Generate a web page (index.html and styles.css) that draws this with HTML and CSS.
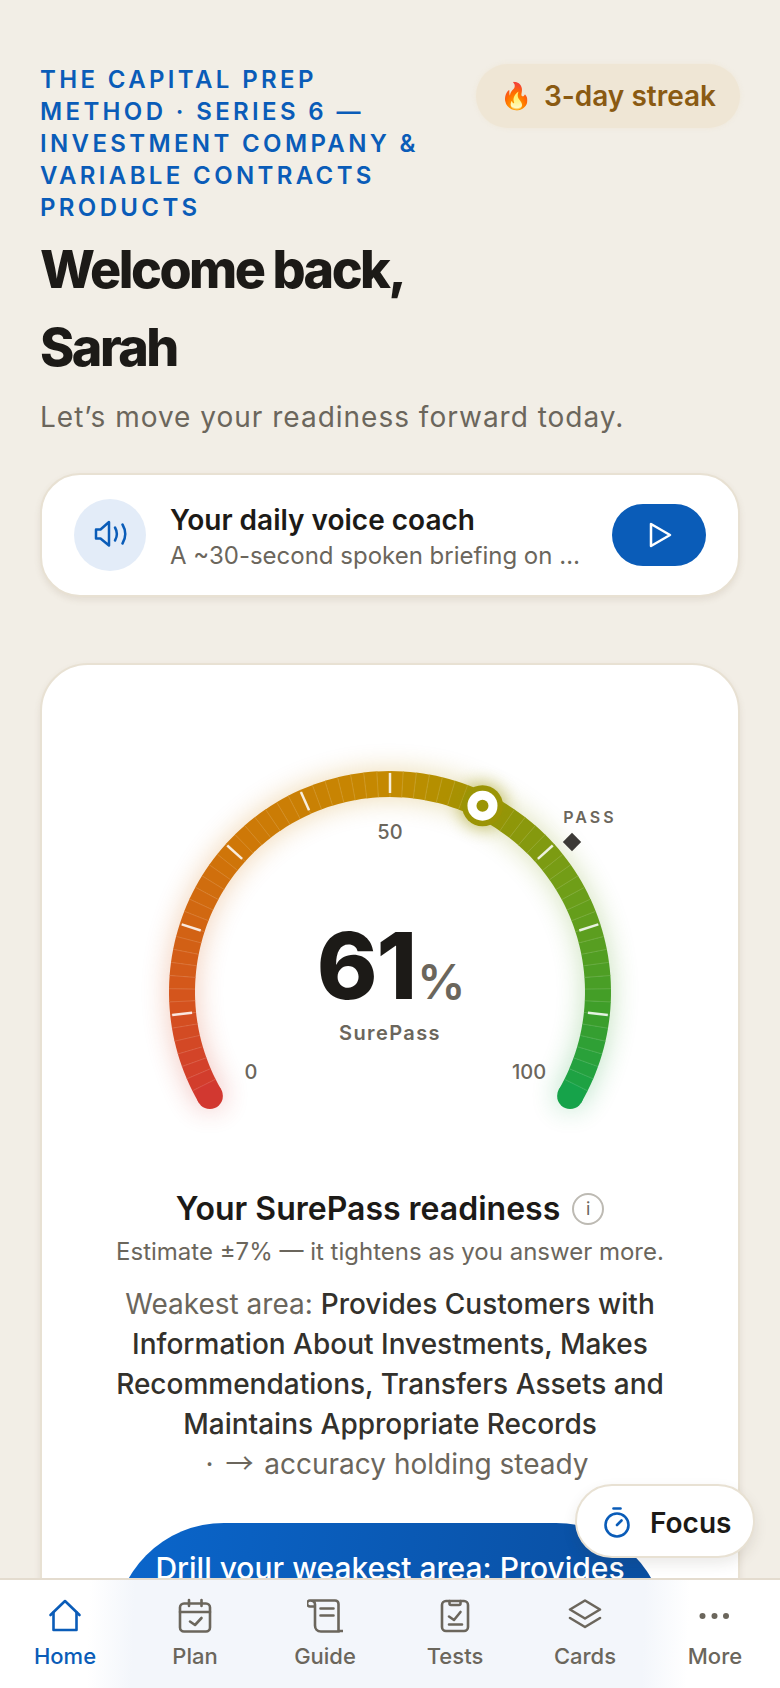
FILE: index.html
```html
<!DOCTYPE html>
<html lang="en">
<head>
<meta charset="utf-8">
<title>Capital Prep</title>
<link rel="stylesheet" href="styles.css">
</head>
<body>
<main class="page">
  <header class="top">
    <div class="intro">
      <p class="eyebrow">THE CAPITAL PREP METHOD · SERIES 6 — INVESTMENT COMPANY &amp; VARIABLE CONTRACTS PRODUCTS</p>
      <h1 class="welcome">Welcome back, Sarah</h1>
    </div>
    <div class="streak"><span class="flame">🔥</span><span>3-day streak</span></div>
  </header>
  <p class="lede">Let’s move your readiness forward today.</p>

  <section class="coach">
    <div class="coach-icon">
      <svg class="ico36" viewBox="0 0 36 36" fill="none" stroke="#0a5cb8" stroke-width="2.5" stroke-linecap="round" stroke-linejoin="round">
        <path d="M4 12.500h4.500L17 5v23.500l-8.500-7H4z"/>
        <path d="M23 10.500c2.200 3.800 2.200 9.200 0 13"/>
        <path d="M30.500 7.500c3.500 6 3.500 13 0 19"/>
      </svg>
    </div>
    <div class="coach-text">
      <div class="coach-title">Your daily voice coach</div>
      <div class="coach-sub">A ~30-second spoken briefing on today’s focus</div>
    </div>
    <button class="play" type="button">
      <svg class="ico36" viewBox="0 0 36 36" fill="none" stroke="#fff" stroke-width="2.500" stroke-linejoin="round"><path d="M10 7v22l19-11z"/></svg>
    </button>
  </section>

  <section class="card">
    <svg class="gauge" id="gauge" viewBox="0 0 552 420" width="552" height="420">
      <g id="glow" class="gauge-glow"></g>
      <g id="segments"></g>
      <g id="ticks"></g>
      <text class="g-num" x="276" y="120">50</text>
      <text class="g-num" x="137" y="360">0</text>
      <text class="g-num" x="415" y="360">100</text>
      <text class="g-pass" x="476" y="104">PASS</text>
      <rect class="g-diamond" x="451.500" y="116.500" width="13" height="13" transform="rotate(45 458 123)"/>
      <g id="marker"></g>
      <text class="g-score" x="277" y="280">61<tspan class="g-pct" dx="1">%</tspan></text>
      <text class="g-label" x="276" y="321">SurePass</text>
    </svg>

    <h2 class="ready">Your SurePass readiness <span class="info">i</span></h2>
    <p class="estimate">Estimate ±7% — it tightens as you answer more.</p>
    <p class="weak">Weakest area: <strong>Provides Customers with Information About Investments, Makes Recommendations, Transfers Assets and Maintains Appropriate Records</strong><span class="trend">· <span class="arrow">→</span> accuracy holding steady</span></p>
    <button class="drill" type="button">Drill your weakest area: Provides Customers with Information About Investments, Makes Recommendations, Transfers Assets and Maintains Appropriate Records</button>
  </section>
</main>

<button class="focus" type="button">
  <svg class="ico36" viewBox="0 0 36 36" fill="none" stroke="#0a5cb8" stroke-width="2.600" stroke-linecap="round"><path d="M14.500 3.500h7"/><circle cx="18" cy="20" r="11.500"/><path d="M18 20l4.500-4.500"/></svg>
  <span>Focus</span>
</button>

<nav class="tabs">
  <a class="tab active">
    <svg class="ico36" viewBox="0 0 36 36" fill="none" stroke="currentColor" stroke-width="2.600" stroke-linecap="round" stroke-linejoin="round"><path d="M3.500 17L18 3l14.500 14"/><path d="M6.500 14.500V32h23V14.500"/></svg>
    <span>Home</span>
  </a>
  <a class="tab">
    <svg class="ico36" viewBox="0 0 36 36" fill="none" stroke="currentColor" stroke-width="2.600" stroke-linecap="round" stroke-linejoin="round"><rect x="3" y="5.500" width="30" height="28" rx="4"/><path d="M3 14h30M12 2v6M24.500 2v6M13 23.500l5 3.500 6.500-7"/></svg>
    <span>Plan</span>
  </a>
  <a class="tab">
    <svg class="ico36" viewBox="0 0 36 36" fill="none" stroke="currentColor" stroke-width="2.600" stroke-linecap="round" stroke-linejoin="round"><path d="M3 2.500h25c2 0 3.500 1.500 3.500 3.500v27H36M3 2.500a3 3 0 0 0 0 6h4.500M3 2.500c3 0 5 1.500 5 4V27.500c0 3 2 6 6 6h18"/><path d="M13.500 10.500h13M13.500 17.500h13"/></svg>
    <span>Guide</span>
  </a>
  <a class="tab">
    <svg class="ico36" viewBox="0 0 36 36" fill="none" stroke="currentColor" stroke-width="2.600" stroke-linecap="round" stroke-linejoin="round"><rect x="5" y="3" width="26" height="30" rx="4"/><path d="M12.500 3v2.500c0 1 .5 1.500 1.500 1.500h8c1 0 1.500-.5 1.500-1.500V3M12 18.500l5 3.500 6.500-8M12 26.500h13"/></svg>
    <span>Tests</span>
  </a>
  <a class="tab">
    <svg class="ico36" viewBox="0 0 36 36" fill="none" stroke="currentColor" stroke-width="2.600" stroke-linecap="round" stroke-linejoin="round"><path d="M18 2.500l15 9-15 9-15-9z"/><path d="M3 20l15 9 15-9"/></svg>
    <span>Cards</span>
  </a>
  <a class="tab">
    <svg class="ico36" viewBox="0 0 36 36" fill="currentColor"><circle cx="5.500" cy="18" r="3"/><circle cx="17.500" cy="18" r="3"/><circle cx="29" cy="18" r="3"/></svg>
    <span>More</span>
  </a>
</nav>
<script src="gauge.js"></script>
</body>
</html>
```
FILE: styles.css
```css
* { box-sizing: border-box; }
html, body { margin: 0; padding: 0; }
body {
  position: relative;
  width: 780px;
  height: 1688px;
  overflow: hidden;
  background: #f2eee6;
  font-family: Inter, "Noto Sans", sans-serif;
  color: #1c1a17;
}
p, h1, h2 { margin: 0; }
.page { padding: 64px 40px 0; }
.top { display: flex; justify-content: space-between; align-items: flex-start; gap: 16px; }
.intro { flex: none; width: 385px; }
.eyebrow {
  font-size: 24px;
  line-height: 32px;
  font-weight: 600;
  letter-spacing: 3.360px;
  color: #0a5cb8;
}
.welcome {
  margin-top: 7px;
  font-size: 52px;
  line-height: 78px;
  font-weight: 800;
  letter-spacing: -2.500px;
  color: #1c1a17;
}
.streak {
  flex: none;
  display: flex;
  align-items: center;
  gap: 12px;
  height: 64px;
  padding: 0 24px;
  border-radius: 32px;
  background: #efe6d5;
  color: #8a5a12;
  font-size: 28px;
  font-weight: 600;
  box-shadow: 0 0 4px rgba(239, 230, 213, .8);
}
.flame { font-size: 26px; line-height: 1; }
.lede {
  margin-top: 9px;
  font-size: 28px;
  line-height: 42px;
  letter-spacing: 1px;
  color: #6b665c;
}
.coach {
  display: flex;
  align-items: center;
  gap: 24px;
  height: 124px;
  margin-top: 35px;
  padding: 0 32px;
  background: #fff;
  border: 2px solid #e8e1d3;
  border-radius: 40px;
  box-shadow: 0 3px 6px rgba(120, 100, 70, .12);
}
.coach-icon {
  flex: none;
  display: flex;
  align-items: center;
  justify-content: center;
  width: 72px;
  height: 72px;
  border-radius: 50%;
  background: #e3ecf8;
}
.ico36 { display: block; width: 36px; height: 36px; flex: none; }
.coach-text { flex: 1; min-width: 0; padding: 4px 8px 0 0; }
.coach-title { font-size: 28px; line-height: 36px; font-weight: 600; color: #1c1a17; }
.coach-sub {
  margin-top: 2px;
  font-size: 24px;
  line-height: 32px;
  color: #6b665c;
  white-space: nowrap;
  overflow: hidden;
  text-overflow: ellipsis;
}
.play {
  flex: none;
  display: flex;
  align-items: center;
  justify-content: center;
  width: 94px;
  height: 62px;
  padding: 0;
  border: 0;
  border-radius: 31px;
  background: #0a5cb8;
}
.card {
  margin-top: 66px;
  height: 1200px;
  padding: 54px 72px 0;
  background: #fff;
  border: 2px solid #e8e1d3;
  border-radius: 48px;
  box-shadow: 0 3px 6px rgba(120, 100, 70, .12);
  text-align: center;
}
.gauge { display: block; overflow: visible; font-family: Inter, "Noto Sans", sans-serif; }
.gauge-glow { filter: blur(14px); opacity: .32; }
.g-num { font-size: 20px; font-weight: 500; fill: #6b665c; text-anchor: middle; }
.g-pass { font-size: 16px; font-weight: 600; fill: #6b665c; letter-spacing: 3px; text-anchor: middle; }
.g-diamond { fill: #3c3a36; }
.g-score { font-size: 92px; font-weight: 800; fill: #1c1a17; text-anchor: middle; letter-spacing: -1px; }
.g-pct { font-size: 48px; font-weight: 600; fill: #6b665c; letter-spacing: 0; }
.g-label { font-size: 20px; font-weight: 600; fill: #6b665c; letter-spacing: 1.400px; text-anchor: middle; }
.ready {
  margin-top: 46px;
  display: flex;
  justify-content: center;
  align-items: center;
  gap: 12px;
  font-size: 32px;
  line-height: 48px;
  font-weight: 600;
  color: #1c1a17;
}
.info {
  display: flex;
  align-items: center;
  justify-content: center;
  width: 32px;
  height: 32px;
  border: 2px solid #bdbab3;
  border-radius: 50%;
  font-size: 18px;
  line-height: 1;
  font-weight: 400;
  color: #6b665c;
}
.estimate { margin-top: 1px; font-size: 24px; line-height: 36px; color: #6b665c; }
.weak { margin-top: 14px; font-size: 28px; line-height: 40px; color: #6b665c; }
.weak strong { font-weight: 500; color: #33312c; }
.trend { display: block; padding-left: 14px; }
.arrow { font-family: "Noto Sans CJK SC", sans-serif; line-height: 1; margin: 0 3px 0 4px; }
.drill {
  display: block;
  width: 100%;
  margin-top: 39px;
  padding: 26px 40px;
  border: 0;
  border-radius: 110px;
  background: linear-gradient(100deg, #0a66cc, #0a4c9c);
  color: #fff;
  font-family: inherit;
  font-size: 30px;
  line-height: 38px;
  font-weight: 500;
}
.focus {
  position: absolute;
  left: 575px;
  top: 1484px;
  display: flex;
  align-items: center;
  gap: 15px;
  width: 180px;
  height: 74px;
  padding: 3px 0 0 22px;
  background: #fff;
  border: 2px solid #e8e1d3;
  border-radius: 37px;
  box-shadow: 0 6px 14px rgba(60, 50, 30, .1);
  font-family: inherit;
  font-size: 28px;
  font-weight: 600;
  color: #1c1a17;
}
.tabs {
  position: absolute;
  left: 0;
  right: 0;
  bottom: 0;
  display: grid;
  grid-template-columns: repeat(6, 1fr);
  height: 110px;
  padding-top: 18px;
  background: linear-gradient(92deg, #fff 90px, #f3f6fb 135px, #f3f6fb 645px, #fff 690px);
  border-top: 2px solid #e4dccf;
}
.tab {
  display: flex;
  flex-direction: column;
  align-items: center;
  gap: 7px;
  font-size: 22px;
  line-height: 30px;
  font-weight: 500;
  color: #6b665c;
}
.tab.active { color: #0a5cb8; }
```
FILE: gauge.js
```js
(function () {
  var NS = 'http://www.w3.org/2000/svg';
  var CX = 276, CY = 273, R = 208, WIDTH = 26, START = -120, SWEEP = 240, COUNT = 70;
  var STOPS = [
    [0, [210, 56, 48]], [0.12, [212, 85, 28]], [0.3, [207, 118, 8]], [0.5, [196, 138, 0]],
    [0.56, [178, 144, 0]], [0.61, [155, 148, 5]], [0.75, [111, 158, 24]], [0.9, [61, 158, 42]], [1, [22, 163, 74]]
  ];
  function colorAt(t) {
    for (var i = 1; i < STOPS.length; i++) {
      if (t <= STOPS[i][0]) {
        var a = STOPS[i - 1], b = STOPS[i], k = (t - a[0]) / (b[0] - a[0]);
        return 'rgb(' + [0, 1, 2].map(function (n) {
          return Math.round(a[1][n] + (b[1][n] - a[1][n]) * k);
        }).join(',') + ')';
      }
    }
    return 'rgb(22,163,74)';
  }
  function pt(deg, r) {
    var a = deg * Math.PI / 180;
    return [CX + r * Math.sin(a), CY - r * Math.cos(a)];
  }
  function el(name, attrs, parent) {
    var e = document.createElementNS(NS, name);
    for (var k in attrs) e.setAttribute(k, attrs[k]);
    parent.appendChild(e);
    return e;
  }
  function drawArc(parent) {
    for (var i = 0; i < COUNT; i++) {
      var a0 = START + SWEEP * i / COUNT, a1 = START + SWEEP * (i + 1) / COUNT + 0.15;
      var p0 = pt(a0, R), p1 = pt(a1, R);
      el('path', {
        d: 'M' + p0[0] + ' ' + p0[1] + 'A' + R + ' ' + R + ' 0 0 1 ' + p1[0] + ' ' + p1[1],
        fill: 'none', stroke: colorAt((i + 0.5) / COUNT), 'stroke-width': WIDTH
      }, parent);
    }
    var s = pt(START, R), e = pt(START + SWEEP, R);
    el('circle', { cx: s[0], cy: s[1], r: WIDTH / 2, fill: colorAt(0) }, parent);
    el('circle', { cx: e[0], cy: e[1], r: WIDTH / 2, fill: colorAt(1) }, parent);
  }
  drawArc(document.getElementById('glow'));
  drawArc(document.getElementById('segments'));

  var ticks = document.getElementById('ticks');
  for (var i = 1; i < COUNT; i++) {
    var ang = START + SWEEP * i / COUNT, a = pt(ang, R - 13), b = pt(ang, R + 13);
    el('line', { x1: a[0], y1: a[1], x2: b[0], y2: b[1], stroke: '#fff', 'stroke-opacity': 0.14, 'stroke-width': 1 }, ticks);
  }
  for (var m = 10; m < 100; m += 10) {
    var ma = START + SWEEP * m / 100, c = pt(ma, R - 9), d = pt(ma, R + 11);
    el('line', { x1: c[0], y1: c[1], x2: d[0], y2: d[1], stroke: '#fff', 'stroke-opacity': 0.85, 'stroke-width': 2.5 }, ticks);
  }

  var marker = document.getElementById('marker');
  var mp = pt(START + SWEEP * 0.61, R), mc = colorAt(0.61);
  el('circle', { cx: mp[0], cy: mp[1], r: 24, fill: mc, opacity: 0.45, style: 'filter:blur(8px)' }, marker);
  el('circle', { cx: mp[0], cy: mp[1], r: 20.5, fill: mc }, marker);
  el('circle', { cx: mp[0], cy: mp[1], r: 15, fill: '#fff' }, marker);
  el('circle', { cx: mp[0], cy: mp[1], r: 6, fill: mc }, marker);
})();
```
